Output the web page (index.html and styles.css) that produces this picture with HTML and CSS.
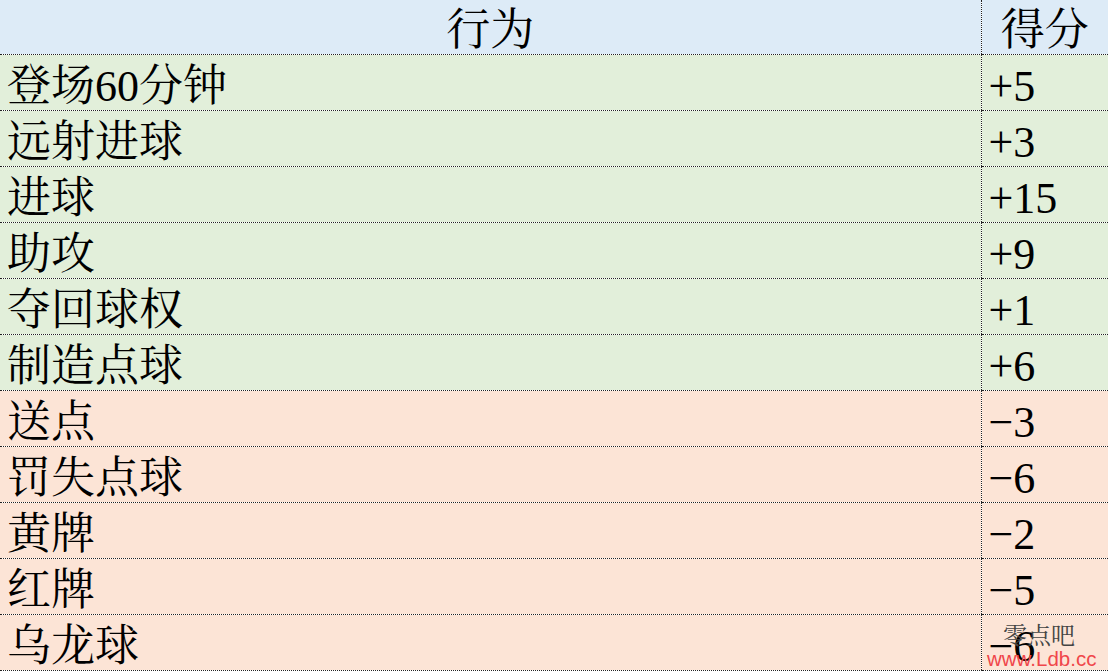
FILE: index.html
```html
<!DOCTYPE html>
<html lang="zh-CN">
<head>
<meta charset="utf-8">
<link rel="stylesheet" href="styles.css">
</head>
<body>
<div class="sheet">
<table class="score-table">
  <colgroup><col class="col-act"><col class="col-pt"></colgroup>
  <thead>
    <tr class="head"><th class="c-act">行为</th><th class="c-pt">得分</th></tr>
  </thead>
  <tbody>
    <tr class="pos"><td class="c-act">登场60分钟</td><td class="c-pt">+5</td></tr>
    <tr class="pos"><td class="c-act">远射进球</td><td class="c-pt">+3</td></tr>
    <tr class="pos"><td class="c-act">进球</td><td class="c-pt">+15</td></tr>
    <tr class="pos"><td class="c-act">助攻</td><td class="c-pt">+9</td></tr>
    <tr class="pos"><td class="c-act">夺回球权</td><td class="c-pt">+1</td></tr>
    <tr class="pos"><td class="c-act">制造点球</td><td class="c-pt">+6</td></tr>
    <tr class="neg"><td class="c-act">送点</td><td class="c-pt">−3</td></tr>
    <tr class="neg"><td class="c-act">罚失点球</td><td class="c-pt">−6</td></tr>
    <tr class="neg"><td class="c-act">黄牌</td><td class="c-pt">−2</td></tr>
    <tr class="neg"><td class="c-act">红牌</td><td class="c-pt">−5</td></tr>
    <tr class="neg"><td class="c-act">乌龙球</td><td class="c-pt">−6</td></tr>
  </tbody>
</table>
<div class="watermark"><span class="wm-cn">零点吧</span><span class="wm-url">www.Ldb.cc</span></div>
</div>
</body>
</html>
```
FILE: styles.css
```css
html, body {
  margin: 0;
  padding: 0;
  width: 1108px;
  height: 671px;
  overflow: hidden;
}
.sheet {
  position: relative;
  width: 1108px;
  height: 671px;
  overflow: hidden;
}
.score-table {
  border-collapse: collapse;
  width: 1108px;
  table-layout: fixed;
  font-family: "Liberation Serif", "Noto Serif CJK SC", "Noto Sans CJK SC", serif;
  font-size: 44px;
  color: #000;
}
.col-act { width: 981px; }
.col-pt { width: 127px; }
.score-table th,
.score-table td {
  padding: 0 0 0 7px;
  height: 55px;
  line-height: 46px;
  vertical-align: bottom;
  font-weight: normal;
  text-align: left;
  border-bottom: 1px dotted #222;
  white-space: nowrap;
  overflow: hidden;
}
.score-table .c-pt {
  border-left: 1px dotted #222;
}
.head th {
  height: 54px;
  background: #ddebf7;
  text-align: center;
  padding: 0;
}
.pos td { background: #e2efda; }
.neg td { background: #fce4d6; }
.watermark {
  position: absolute;
  left: 987px;
  top: 620px;
  width: 121px;
  display: flex;
  flex-direction: column;
  align-items: flex-start;
}
.wm-cn {
  margin-left: 16px;
  font-family: "Noto Serif CJK SC", "Noto Sans CJK SC", serif;
  font-size: 24px;
  line-height: 27px;
  color: #444;
}
.wm-url {
  font-family: "Liberation Sans", sans-serif;
  font-size: 20.5px;
  line-height: 24px;
  color: #f0464a;
}
```
